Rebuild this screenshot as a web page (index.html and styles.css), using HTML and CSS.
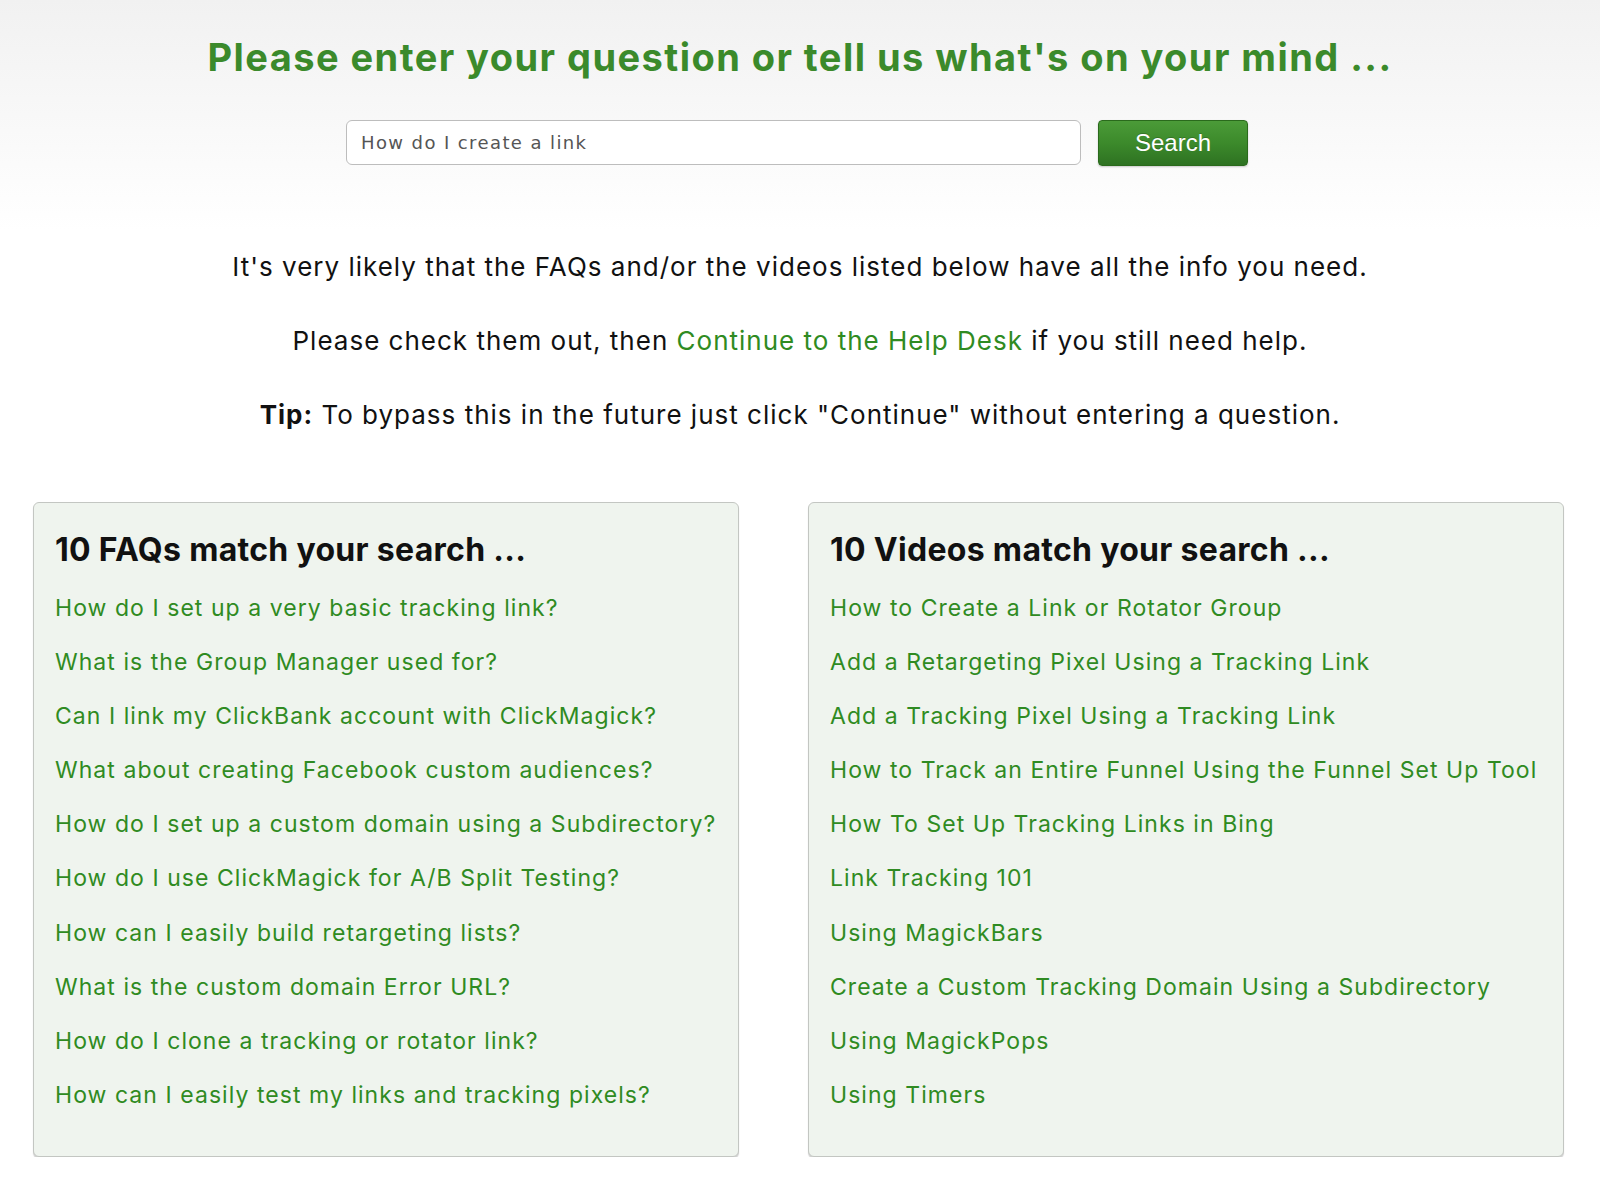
FILE: index.html
```html
<!DOCTYPE html>
<html lang="en">
<head>
<meta charset="utf-8">
<title>Help</title>
<link rel="stylesheet" href="styles.css">
</head>
<body>
<div class="page">
  <header class="top">
    <h1 class="title">Please enter your question or tell us what's on your mind ...</h1>
    <form class="search-row">
      <input class="search-input" type="text" value="How do I create a link">
      <button class="search-btn" type="button">Search</button>
    </form>
  </header>

  <section class="intro">
    <p class="intro-line">It's very likely that the FAQs and/or the videos listed below have all the info you need.</p>
    <p class="intro-line">Please check them out, then <a class="inline-link" href="#">Continue to the Help Desk</a> if you still need help.</p>
    <p class="intro-line"><strong>Tip:</strong> To bypass this in the future just click "Continue" without entering a question.</p>
  </section>

  <section class="panels">
    <div class="panel panel-faq">
      <h2 class="panel-title">10 FAQs match your search ...</h2>
      <a class="item" href="#">How do I set up a very basic tracking link?</a>
      <a class="item" href="#">What is the Group Manager used for?</a>
      <a class="item" href="#">Can I link my ClickBank account with ClickMagick?</a>
      <a class="item" href="#">What about creating Facebook custom audiences?</a>
      <a class="item" href="#">How do I set up a custom domain using a Subdirectory?</a>
      <a class="item" href="#">How do I use ClickMagick for A/B Split Testing?</a>
      <a class="item" href="#">How can I easily build retargeting lists?</a>
      <a class="item" href="#">What is the custom domain Error URL?</a>
      <a class="item" href="#">How do I clone a tracking or rotator link?</a>
      <a class="item" href="#">How can I easily test my links and tracking pixels?</a>
    </div>
    <div class="panel panel-video">
      <h2 class="panel-title">10 Videos match your search ...</h2>
      <a class="item" href="#">How to Create a Link or Rotator Group</a>
      <a class="item" href="#">Add a Retargeting Pixel Using a Tracking Link</a>
      <a class="item" href="#">Add a Tracking Pixel Using a Tracking Link</a>
      <a class="item" href="#">How to Track an Entire Funnel Using the Funnel Set Up Tool</a>
      <a class="item" href="#">How To Set Up Tracking Links in Bing</a>
      <a class="item" href="#">Link Tracking 101</a>
      <a class="item" href="#">Using MagickBars</a>
      <a class="item" href="#">Create a Custom Tracking Domain Using a Subdirectory</a>
      <a class="item" href="#">Using MagickPops</a>
      <a class="item" href="#">Using Timers</a>
    </div>
  </section>
</div>
</body>
</html>
```

FILE: styles.css
```css
* { box-sizing: border-box; }

html, body {
  margin: 0;
  padding: 0;
}

body {
  background: #ffffff linear-gradient(to bottom, #f1f1f1 0px, #ffffff 230px) no-repeat;
  font-family: Inter, Lato, "Open Sans", Arial, sans-serif;
  color: #111;
}

.page {
  width: 1600px;
  padding-top: 34px;
}

.top {
  display: flex;
  flex-direction: column;
  align-items: center;
}

.title {
  margin: 0;
  font-family: Inter, Lato, Arial, sans-serif;
  font-weight: 700;
  font-size: 38px;
  line-height: 46px;
  letter-spacing: 1.45px;
  color: #3b8a2b;
  white-space: nowrap;
}

.search-row {
  margin: 40px 0 0 0;
  display: flex;
  align-items: flex-start;
  gap: 17px;
  padding-right: 6px;
}

.search-input {
  width: 735px;
  height: 45px;
  margin: 0;
  padding: 0 14px;
  border: 1px solid #bdbdbd;
  border-radius: 6px;
  background: #fff;
  font-family: "DejaVu Sans", Verdana, sans-serif;
  font-size: 18px;
  letter-spacing: 1.4px;
  color: #555;
  outline: none;
}

.search-btn {
  width: 150px;
  height: 46px;
  margin: 0;
  padding: 0;
  border: 1px solid #2a6a1c;
  border-radius: 4px;
  background: linear-gradient(to bottom, #4b9b38 0%, #3c8a2b 50%, #2e7222 100%);
  box-shadow: 0 1px 2px rgba(0,0,0,0.2);
  color: #fff;
  font-family: "Liberation Sans", Arial, sans-serif;
  font-size: 24px;
  line-height: 44px;
  text-shadow: 0 -1px 0 rgba(0,0,0,0.2);
  cursor: pointer;
}

.intro {
  margin-top: 86px;
  display: flex;
  flex-direction: column;
  align-items: center;
  gap: 44px;
}

.intro-line {
  margin: 0;
  font-size: 26px;
  line-height: 30px;
  letter-spacing: 1px;
  color: #111;
  white-space: nowrap;
}

.intro-line strong {
  font-weight: 700;
}

.inline-link {
  color: #2f8b22;
  text-decoration: none;
}

.panels {
  margin-top: 72px;
  padding-left: 33px;
  display: grid;
  grid-template-columns: 706px 756px;
  column-gap: 69px;
  align-items: start;
}

.panel {
  display: flex;
  flex-direction: column;
  height: 655px;
  padding: 28px 20px 0 21px;
  background: #eff4ee;
  border: 1px solid #c3c6c2;
  border-radius: 6px;
  box-shadow: 0 2px 1px rgba(0,0,0,0.18);
}

.panel-title {
  margin: 0 0 12px 0;
  font-family: Inter, Lato, Arial, sans-serif;
  font-weight: 700;
  font-size: 32px;
  line-height: 38px;
  letter-spacing: 0.3px;
  color: #111;
  white-space: nowrap;
}

.item {
  display: block;
  font-size: 23px;
  line-height: 54.1px;
  letter-spacing: 1.05px;
  color: #2f8b22;
  text-decoration: none;
  white-space: nowrap;
}
```
